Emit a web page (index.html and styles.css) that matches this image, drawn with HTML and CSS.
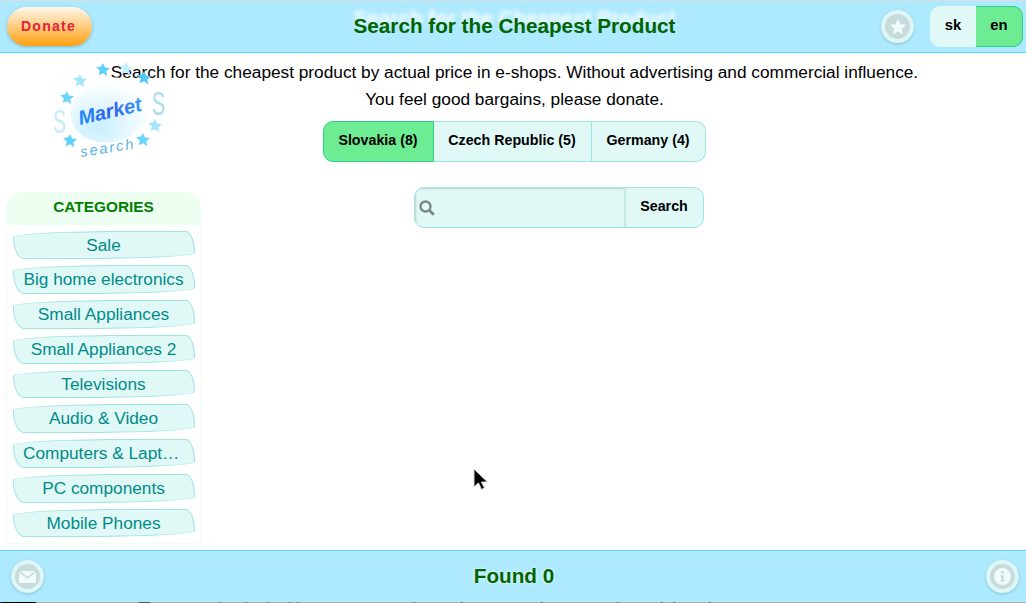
FILE: index.html
```html
<!DOCTYPE html>
<html>
<head>
    <meta charset="utf-8">
    <title>Search for the Cheapest Product</title>
    <link rel="stylesheet" href="styles.css">
</head>
<body>
    <div id="header">
        <button class="donate">Donate</button>
        <h1 class="title">Search for the Cheapest Product</h1>
        <div class="header-right">
            <span class="round-icon">
                <svg viewBox="0 0 20 20" width="18" height="18"><path fill="#f2fbfb" d="M10 1l2.700 5.900 6.300.7-4.700 4.300 1.300 6.300L10 15.100 4.400 18.200l1.300-6.300L1 7.600l6.300-.7z"/></svg>
            </span>
            <div class="lang-group">
                <button class="seg">sk</button>
                <button class="seg active">en</button>
            </div>
        </div>
    </div>

    <div id="main">
        <p class="intro">Search for the cheapest product by actual price in e-shops. Without advertising and commercial influence.</p>
        <p class="intro">You feel good bargains, please donate.</p>

        <div class="logo">
            <svg viewBox="0 0 120 100" width="120" height="100">
                <defs>
                    <radialGradient id="egg" cx="0.3" cy="0.7" r="0.7">
                        <stop offset="0" stop-color="#c8eeff"/>
                        <stop offset="1" stop-color="#ffffff"/>
                    </radialGradient>
                    <linearGradient id="word" x1="0" x2="1">
                        <stop offset="0" stop-color="#1e90ff"/>
                        <stop offset="0.5" stop-color="#2f60f0"/>
                        <stop offset="1" stop-color="#3aa0f0"/>
                    </linearGradient>
                    <path id="star" d="M0 -7l2 4.600 5 .5-3.800 3.300 1.100 4.900L0 3.200-4.300 5.300l1.100-4.900L-7 -2.900l5-.5z"/>
                </defs>
                <ellipse cx="60" cy="51" rx="40" ry="32" fill="url(#egg)" transform="rotate(-15 60 51)"/>
                <use href="#star" x="53" y="11" fill="#5fd0fb"/>
                <use href="#star" x="30" y="22" fill="#a5e6fd"/>
                <use href="#star" x="17" y="39" fill="#6dd5fb"/>
                <use href="#star" x="20" y="82" fill="#5fd0fb"/>
                <use href="#star" x="105" y="67" fill="#a5e6fd"/>
                <use href="#star" x="93" y="81" fill="#6dd5fb"/>
                <use href="#star" x="76" y="10" fill="#c4effd"/>
                <use href="#star" x="94" y="19" fill="#4fc8fa"/>
                <text class="logo-s" transform="translate(3 74) scale(.72 1.2)" fill="#c4ecfb">S</text>
                <text class="logo-s" transform="translate(102 56) scale(.72 1.2)" fill="#a6e0ea">S</text>
                <text class="logo-market" x="30" y="66" fill="url(#word)" transform="rotate(-13 30 66)">Market</text>
                <text class="logo-search" x="31" y="98" fill="#5ab4ea" transform="rotate(-9 31 98)">search</text>
            </svg>
        </div>

        <div class="countries">
            <button class="seg active">Slovakia (8)</button>
            <button class="seg">Czech Republic (5)</button>
            <button class="seg">Germany (4)</button>
        </div>

        <div class="content">
            <div class="categories">
                <div class="categories-title">CATEGORIES</div>
                <ul class="category-list">
                    <li class="category">Sale</li>
                    <li class="category">Big home electronics</li>
                    <li class="category">Small Appliances</li>
                    <li class="category">Small Appliances 2</li>
                    <li class="category">Televisions</li>
                    <li class="category">Audio &amp; Video</li>
                    <li class="category">Computers &amp; Laptops</li>
                    <li class="category">PC components</li>
                    <li class="category">Mobile Phones</li>
                </ul>
            </div>
            <div class="search-area">
                <div class="search-box">
                    <div class="search-field">
                        <svg viewBox="0 0 16 16" width="16" height="16"><circle cx="6.500" cy="6.500" r="5" fill="none" stroke="#7a8787" stroke-width="2.400"/><path d="M10.500 10.500l4.300 4.300" stroke="#7a8787" stroke-width="2.800"/></svg>
                    </div>
                    <button class="search-button">Search</button>
                </div>
            </div>
        </div>
    </div>

    <div id="footer">
        <span class="round-icon">
            <svg viewBox="0 0 20 14" width="17" height="12"><path fill="#f2fbfb" d="M1 0h18l-9 7z"/><path fill="#f2fbfb" d="M0 1.500l10 7.700 10-7.700V14H0z"/></svg>
        </span>
        <div class="found">Found 0</div>
        <span class="round-icon">
            <svg viewBox="0 0 20 20" width="17" height="17"><path fill="#f2fbfb" fill-rule="evenodd" d="M10 0a10 10 0 1 1 0 20a10 10 0 1 1 0-20zM8.500 3.500v3h3v-3zM7.500 8.500v1.500h1.200v4.500H7.500V16h5v-1.500h-1.200V8.500z"/></svg>
        </span>
    </div>
    <div class="page-edge"></div>

    <svg class="cursor" viewBox="0 0 14 24" width="14" height="24"><path d="M1 1v18l4.500-4 3 6.500 3-1.500-3-6h6z" fill="#000" stroke="#ddd" stroke-width="1"/></svg>
</body>
</html>
```

FILE: styles.css
```css
:root {
    --bar-blue: #aeeaff;
    --bar-line: #4fdcfa;
    --seg-bg: #e0f9f6;
    --seg-line: #9fe3e3;
    --seg-active: #6eec94;
    --seg-active-line: #2fcf85;
    --dark-green: #006400;
}

html,
body {
    height: 100%;
}

body {
    margin: 0;
    font-family: "Liberation Sans", sans-serif;
    color: #000;
    background: #fff;
    display: flex;
    flex-direction: column;
    overflow: hidden;
    position: relative;
}

button {
    font-family: inherit;
}

#header {
    height: 51px;
    flex: 0 0 auto;
    border-top: 1px solid #dddddd;
    border-bottom: 1px solid var(--bar-line);
    background: var(--bar-blue);
    display: flex;
    align-items: center;
    justify-content: space-between;
    padding: 0 3px 0 7px;
}

.donate {
    width: 85px;
    height: 39px;
    border: 0;
    border-radius: 20px;
    margin-top: -1px;
    padding: 0 2px 0 0;
    background: linear-gradient(#fff8ec, #ffa010);
    box-shadow: 0 1px 3px rgba(60, 130, 150, 0.5);
    color: #e6203e;
    font-size: 14px;
    font-weight: bold;
    letter-spacing: 1.300px;
}

.title {
    margin: 0;
    font-size: 20.700px;
    font-weight: bold;
    color: var(--dark-green);
    text-shadow: 0 -8px 4px #fff;
    position: absolute;
    left: 3px;
    right: 0;
    top: 14px;
    text-align: center;
    pointer-events: none;
}

.header-right {
    display: flex;
    align-items: center;
    gap: 16px;
}

.round-icon {
    width: 25px;
    height: 25px;
    border: 4px solid #dff6f5;
    border-radius: 50%;
    background: #c6dcdc;
    box-shadow: 0 1px 3px rgba(60, 130, 150, 0.4);
    display: flex;
    align-items: center;
    justify-content: center;
    flex: 0 0 auto;
}

.lang-group,
.countries {
    display: flex;
}

.seg {
    border: 1px solid var(--seg-line);
    border-left-width: 0;
    background: var(--seg-bg);
    font-size: 14.250px;
    font-weight: bold;
    color: #000;
    padding: 0 0 3px;
}

.seg:first-child {
    border-left-width: 1px;
    border-radius: 10px 0 0 10px;
}

.seg:last-child {
    border-radius: 0 10px 10px 0;
}

.seg.active {
    background: var(--seg-active);
    border-color: var(--seg-active-line);
}

.lang-group .seg {
    width: 46px;
    height: 41px;
    margin-top: -1px;
    padding-bottom: 2px;
    font-size: 14.800px;
}

.lang-group .seg:last-child {
    width: 47px;
}

.lang-group .seg:first-child {
    border-color: var(--seg-bg);
}

#main {
    flex: 1;
    min-height: 0;
    position: relative;
    padding-top: 6px;
}

.logo {
    position: absolute;
    left: 50px;
    top: 6px;
}

.logo svg {
    display: block;
}

.logo-s {
    font-size: 27px;
}

.logo-market {
    font-size: 20px;
    font-weight: bold;
    font-style: italic;
}

.logo-search {
    font-size: 14.500px;
    font-style: italic;
    letter-spacing: 2px;
}

.intro {
    margin: 0;
    font-size: 17.250px;
    line-height: 27px;
    text-align: center;
    padding-left: 3px;
}

.countries {
    justify-content: center;
    margin-top: 8px;
    padding-left: 2px;
    position: relative;
}

.countries .seg {
    height: 41px;
}

.countries .seg:nth-child(1) {
    width: 111px;
}

.countries .seg:nth-child(2) {
    width: 158px;
}

.countries .seg:nth-child(3) {
    width: 114px;
}

.content {
    display: flex;
    margin-top: 30px;
    padding-left: 6px;
}

.categories {
    width: 195px;
    flex: 0 0 auto;
    box-sizing: border-box;
    border: 1px solid #ecfff0;
    border-top: 0;
    border-radius: 16px 16px 0 0;
    padding-bottom: 6px;
}

.categories-title {
    height: 33px;
    line-height: 29px;
    background: #ecfff0;
    border-radius: 16px 16px 0 0;
    text-align: center;
    font-size: 15.400px;
    font-weight: bold;
    color: #008000;
}

.category-list {
    list-style: none;
    margin: 0;
    padding: 5.500px 5px 0 6px;
    display: flex;
    flex-direction: column;
    gap: 6px;
}

.category {
    height: 26.750px;
    line-height: 26.750px;
    padding: 0 10px 0 9px;
    background: var(--seg-bg);
    border: 1px solid var(--seg-line);
    border-radius: 120px 9px 120px 11px / 6px 22px 6px 22px;
    text-align: center;
    font-size: 17.250px;
    color: #008b8b;
    white-space: nowrap;
    overflow: hidden;
    text-overflow: ellipsis;
}

.search-area {
    flex: 1;
    display: flex;
    justify-content: center;
    padding-right: 110px;
}

.search-box {
    display: flex;
    width: 290px;
    height: 41px;
    margin-top: -5px;
    box-sizing: border-box;
    border: 1px solid var(--seg-line);
    border-radius: 10px;
    background: var(--seg-bg);
    overflow: hidden;
}

.search-field {
    flex: 1;
    display: flex;
    align-items: center;
    padding-left: 4px;
    border-right: 2px solid #c8e8e6;
    box-shadow: inset 1px 1px 2px rgba(0, 0, 0, 0.15);
}

.search-button {
    width: 77px;
    border: 0;
    background: none;
    font-size: 14.250px;
    font-weight: bold;
    color: #000;
    padding: 0 0 3px;
}

#footer {
    height: 51px;
    flex: 0 0 auto;
    border-top: 1px solid #5fd6f5;
    background: var(--bar-blue);
    display: flex;
    align-items: center;
    justify-content: space-between;
    padding: 0 7px 0 11px;
}

.found {
    font-size: 20.700px;
    font-weight: bold;
    color: var(--dark-green);
    text-shadow: 0 0 3px #fff;
    padding: 0 2px 2px 0;
}

.page-edge {
    height: 1px;
    flex: 0 0 auto;
    background:
        linear-gradient(90deg, #102060 0 2px, #000 2px 36px, transparent 36px),
        linear-gradient(90deg, transparent 139px, #555 139px 150px, transparent 150px 219px, #444 219px 220px, transparent 220px 246px, #444 246px 247px, transparent 247px 267px, #444 267px 268px, transparent 268px 289px, #444 289px 290px, transparent 290px 297px, #444 297px 298px, transparent 298px 414px, #444 414px 415px, transparent 415px 461px, #444 461px 462px, transparent 462px 541px, #444 541px 542px, transparent 542px 617px, #444 617px 618px, transparent 618px 661px, #444 661px 662px, transparent 662px 674px, #444 674px 675px, transparent 675px 709px, #444 709px 710px, transparent 710px),
        #aaa;
}

.cursor {
    position: absolute;
    left: 473px;
    top: 468px;
}
```
